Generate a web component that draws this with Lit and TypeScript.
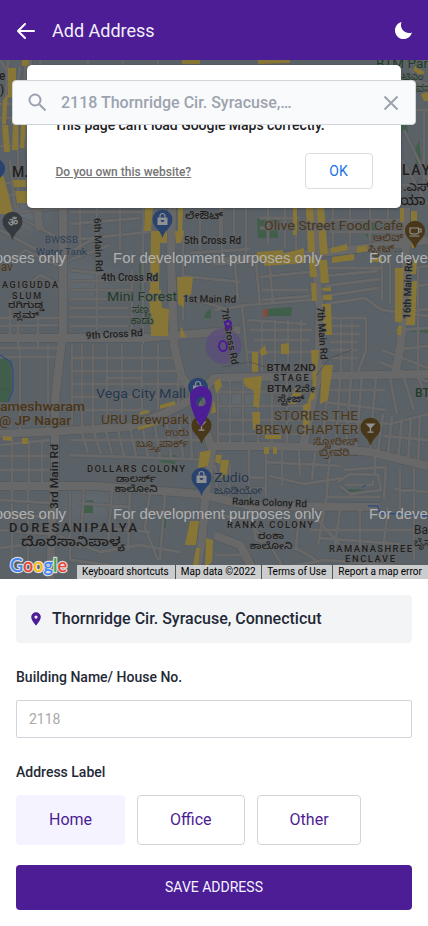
import { LitElement, html, svg, css, nothing } from "lit";
import { customElement, state } from "lit/decorators.js";
import { classMap } from "lit/directives/class-map.js";

/** Road network, grouped by how wide each street is drawn. */
const MAJOR = [
  "M63 208V330L55 400V470L52 525L50 579",
  "M172 208L171 260L174 345L181 375L196 398L212 450L205 500L203 530L196 579",
  "M0 338H145L240 330",
  "M0 434L60 431L130 427L165 413L195 398L214 378L428 374",
  "M212 446L270 446L330 448L370 452L428 466",
  "M316 208V270L320 310L318 375L309 420L303 447",
  "M214 262L330 252L428 240",
  "M406 208L405 300L400 350L395 374",
  "M0 486H95L200 494L250 506L380 507",
  "M28 60L26 120L32 170L40 230",
  "M214 535L240 545L258 579",
];

const MINOR = [
  // north-west
  "M0 183H27M0 195H27M0 208L63 240M0 230L60 262M20 212L60 208M0 270L25 250L63 268M10 335V300L40 275L63 286",
  "M70 212H145M70 224L140 218M70 240L150 232M70 252L95 238M70 260L110 245M97 208V330M143 208V345M120 208V250M80 208V250",
  "M70 281H150M70 290H132M70 299H128M70 308H128M70 317H130M70 326H128M132 270V338M70 270L105 274",
  "M0 318H60M0 326L58 325M18 318V350M38 318V350M20 345V430M48 345V430M0 348H60M0 357H60",
  "M0 60L25 100M8 60L4 130M20 66L12 125M0 104H27M0 118H27M18 125V208M10 160L15 208M0 146H27",
  "M40 60V66M88 60V66M123 60V66M158 60V66M186 60V66",
  // centre
  "M183 230V320M183 240H235M190 253L250 249M183 276L240 282M200 208V250M222 208V262M246 208V260M183 296L230 310M214 310L242 306L248 365",
  "M235 262L238 300M256 262L260 305M269 258L273 303M262 290H308M262 300L310 296M260 277L310 272M238 306L320 299",
  "M250 330H312M254 340H310M248 320L306 324M262 320V372M275 320V372M288 320V372M301 320V372M248 352H312",
  "M325 268H382M325 276L378 271M325 286L380 279M325 296L378 288M325 304L365 298L382 310L428 316M350 247L352 262M382 262V300M390 258V304",
  "M325 318H366V350L358 372M330 326H360M330 334H360M330 342H358M330 350H358M330 358H358M341 318V372M352 322V372",
  // north-east
  "M220 208V240M234 208V240M268 208V245M285 208V248M296 208V250M333 208V250M350 208V245M370 208V242M388 208V240M260 218H300M260 228H300M330 220H402M330 232H402",
  "M404 130L428 180M402 160L428 205M402 185H428M408 65L428 96M404 78L428 84M424 110V190M403 110H428",
  "M400 270L428 266M400 290L428 284M400 312L428 309M396 330L428 328M395 350L428 346M418 266V372",
  // middle band
  "M72 345V425M82 345V426M93 345V426M107 345V425M122 345V420M142 345V414M158 345V410M178 378V402",
  "M72 358H178M72 371H180M72 384H192M72 397H158M72 410H147M108 378H142",
  "M70 440H200M70 455L215 460M82 433L88 453M94 432L101 454M106 432L112 454M118 430L124 456M130 428L136 456M142 424L148 457M154 420L160 457M166 416L171 457M178 414L183 457M190 416L192 460",
  "M0 445L50 440M0 456H54M0 470H54M12 440V484M29 440V484M42 440V484",
  "M218 382V445M230 378V445M243 377V446M258 376V446M272 376V446M287 376V446M218 392H310M218 406H310M218 420H306M218 434H304",
  "M329 378L322 444M340 377L336 446M351 377L346 446M362 376L356 448M376 375L370 450M389 373L397 414M402 372L414 410M415 370L428 400",
  "M330 390H385M325 402L386 410M328 420L390 424L428 414M380 362L428 382M382 350L428 368",
  "M383 414L378 450M392 416L388 455M402 418L398 459M411 417L408 462M420 415L418 464M384 436L428 440",
  // south
  "M70 493L70 560M84 490L80 548M112 490L108 546M130 491L128 550M78 503L130 507M72 525L150 532M150 492L145 528L158 560M165 494L160 560",
  "M0 500L50 503M0 514L52 517M0 530L48 534M12 490V560M28 490V560M0 548L48 542M60 536L100 552L140 545L180 552M70 560L110 565M146 512H195",
  "M215 465L218 500M230 465L228 505M249 448V505M266 450V500M214 475L264 478M214 490L266 488M282 450V486M299 451L300 475M315 452L312 480M266 462L340 466M270 476L304 484L342 478",
  "M338 482L350 474L378 475L381 490L350 494L340 486M345 485H373V480M344 470L386 467L384 499M325 497H380M330 455L326 500L318 545M375 455V475",
  "M218 515L245 519L270 545L290 579M250 508L256 540L300 550M300 508L296 548L316 560M318 520L340 545M340 510L334 552M310 530H420M318 538L400 544M360 509V548M388 507L382 560M400 469V520M414 468V560M270 570L325 560L428 568M215 555H250M394 489L428 492",
];

const FOOTPATH = "M222 367L250 362L275 370M316 376L330 358L352 350M0 389L10 390M402 204L420 178";

const YELLOW = [
  "2,125 8,125 10,152 4,152", "13,124 18,124 18,150 12,150", "21,124 26,124 24,148 20,148",
  "0,164 9,196 13,214 0,214", "13,180 26,180 26,187 14,187", "15,191 27,191 27,203 17,203",
  "8,68 16,68 16,96 8,98", "3,100 8,94 6,124 2,124", "17,106 25,106 25,120 13,120",
  "22,60 29,60 28,66 22,66", "145,208 153,208 151,231 144,231", "178,208 183,208 182,240 178,240",
  "151,231 167,231 167,243 160,243 159,290 150,290", "149,290 161,290 162,308 169,309 168,336 151,336",
  "175,231 184,231 181,243 176,243", "177,277 193,277 191,295 184,297 184,307 178,304", "181,326 186,337 180,337",
  "293,208 297,208 297,235 293,235", "306,208 313,208 315,252 308,252", "317,208 324,208 328,254 320,255",
  "257,252 283,250 283,258 257,261", "264,259 304,248 304,263 264,266", "309,257 315,257 317,277 310,277",
  "319,260 327,260 329,283 321,283", "311,283 316,283 317,301 312,301", "322,288 331,287 331,291 323,291",
  "323,295 332,295 332,300 323,300", "322,304 331,304 332,335 325,335 323,320", "331,248 347,244 348,250 331,253",
  "332,257 354,254 354,260 332,263", "357,247 367,245 368,251 357,253", "395,268 404,268 402,322 395,322",
  "411,231 416,231 416,248 412,248", "410,260 417,260 416,274 410,274", "410,281 417,281 415,325 406,325",
  "370,258 382,257 382,262 370,262", "400,208 404,208 404,222 400,222", "398,326 402,326 401,335 397,335",
  "281,344 289,343 289,354 281,354", "260,350 265,345 267,354 261,356", "252,352 258,352 258,372 252,372",
  "243,378 262,376 260,396 259,408 253,406 254,391 245,386", "252,412 260,412 260,429 253,430",
  "311,350 319,350 315,398 307,404 313,386", "322,365 333,365 328,400 320,404", "265,435 281,435 281,439 265,439",
  "262,427 269,427 269,433 262,433", "264,447 269,447 269,454 264,454", "273,447 277,447 277,454 273,454",
  "221,460 229,460 227,474 219,479", "214,382 220,378 222,386 216,394", "295,388 303,391 296,404 288,404",
  "3,436 12,437 12,441 3,440", "22,438 28,438 28,444 22,444", "140,412 149,410 149,413 139,415",
  "160,405 175,401 175,405 160,409", "138,427 160,421 160,424 138,430", "214,399 216,412 211,414",
  "200,452 211,450 208,466 198,468", "190,521 199,521 196,545 185,545", "196,548 200,548 198,565 193,565",
  "206,538 213,540 212,562 205,568", "216,455 222,455 220,464 215,462", "258,60 290,60 290,63 258,64",
  "182,60 200,60 200,64 182,64", "415,66 425,72 421,76 413,70", "421,94 428,92 428,101 424,101",
  "411,211 417,211 417,222 411,222", "303,405 311,402 309,430 303,436",
];

const GREEN = [
  "0,355 11,362 12,390 8,402 0,402", "267,309 292,307 291,316 267,316", "84,501 93,500 93,513 84,513",
  "257,219 278,216 278,238 258,238", "366,224 376,222 376,237 366,237", "161,456 176,455 175,464 159,462",
  "162,515 166,512 166,528 162,528", "342,489 372,490 371,494 343,492", "407,327 428,327 428,333 407,331",
  "415,150 419,140 421,160 416,166", "139,264 143,264 144,320 141,320", "206,312 211,309 211,318 204,318",
  "402,125 407,125 408,132 402,132",
];

type Label = { t: string; x: number; y: number; s?: number; w?: number; c?: string; a?: string; r?: number; b?: boolean };

const LABELS: Label[] = [
  { t: "6th Main Rd", x: 94, y: 218, s: 10, w: 54, r: 88, b: true },
  { t: "BWSSB", x: 45, y: 243, s: 9.5, w: 33, c: "civic" },
  { t: "Water Tank", x: 36, y: 254.5, s: 9.5, w: 51, c: "civic" },
  { t: "nav", x: -6, y: 271, s: 12, c: "food" },
  { t: "AGIGUDDA", x: 2, y: 288, s: 9, w: 56, b: true },
  { t: "SLUM", x: 12, y: 298.5, s: 9, w: 29, b: true },
  { t: "ರಗಿಗುಡ್ಡ", x: 26, y: 308, s: 9, w: 36, a: "middle", b: true },
  { t: "ಸ್ಲಮ್", x: 26, y: 318, s: 9, w: 26, a: "middle", b: true },
  { t: "4th Cross Rd", x: 101, y: 281, s: 10, w: 57, b: true },
  { t: "5th Cross Rd", x: 184, y: 244, s: 10, w: 57, b: true },
  { t: "1st Main Rd", x: 183, y: 302, s: 10, w: 53, b: true, r: 1 },
  { t: "Mini Forest", x: 107, y: 301, s: 13, w: 70, c: "park" },
  { t: "ಸಣ್ಣ", x: 141, y: 313, s: 10, w: 18, a: "middle", c: "park" },
  { t: "ಕಾಡು", x: 142, y: 324, s: 10, w: 23, a: "middle", c: "park" },
  { t: "9th Cross Rd", x: 86, y: 339, s: 10, w: 57, b: true, r: -3 },
  { t: "ಲೇಔಟ್", x: 204, y: 219, s: 10, w: 38, a: "middle", b: true },
  { t: "Olive Street Food Cafe", x: 264, y: 230, s: 12.5, w: 139, c: "food" },
  { t: "ಆಲಿವ್", x: 403, y: 241, s: 10, w: 30, a: "end", c: "food" },
  { t: "ಸ್ಟ್ರೀಟ್...", x: 403, y: 252, s: 10, w: 35, a: "end", c: "food" },
  { t: "16th Main Rd", x: 410, y: 319, s: 10, w: 59, r: -88, b: true },
  { t: "7th Main Rd", x: 317, y: 307, s: 10, w: 53, r: 86, b: true },
  { t: "7th Cross Rd", x: 221, y: 309, s: 10, w: 57, r: 79, b: true },
  { t: "BTM 2ND", x: 291, y: 371, s: 9, w: 49, a: "middle", b: true },
  { t: "STAGE", x: 291, y: 381, s: 9, w: 35, a: "middle", b: true },
  { t: "BTM 2ನೇ", x: 291, y: 391.5, s: 9.5, w: 48, a: "middle", b: true },
  { t: "ಸ್ಟೇಜ್", x: 291, y: 402, s: 9.5, w: 27, a: "middle", b: true },
  { t: "Vega City Mall", x: 96, y: 398, s: 13, w: 90, c: "shop" },
  { t: "ameshwaram", x: 0, y: 411, s: 13, w: 85, c: "food", b: true },
  { t: "@ JP Nagar", x: -1, y: 425, s: 13, w: 72, c: "food", b: true },
  { t: "URU Brewpark", x: 101, y: 424, s: 13, w: 88, c: "food" },
  { t: "ಉರು", x: 189, y: 436, s: 10, w: 24, a: "end", c: "food" },
  { t: "ಬ್ರ್ಯೂಪಾರ್ಕ್", x: 189, y: 447, s: 10, w: 53, a: "end", c: "food" },
  { t: "STORIES THE", x: 358, y: 420, s: 13.5, w: 84, a: "end", c: "food" },
  { t: "BREW CHAPTER", x: 358, y: 434, s: 13.5, w: 103, a: "end", c: "food" },
  { t: "ಸ್ಟೋರೀಸ್", x: 358, y: 445, s: 10, w: 45, a: "end", c: "food" },
  { t: "ಬ್ರೀವರಿ...", x: 358, y: 456, s: 10, w: 39, a: "end", c: "food" },
  { t: "BTM", x: 415, y: 397, s: 12, c: "park", b: true },
  { t: "3rd Main Rd", x: 58, y: 509, s: 11, w: 65, r: -90, b: true },
  { t: "DOLLARS COLONY", x: 87, y: 472, s: 9.4, w: 98, b: true },
  { t: "ಡಾಲರ್ಸ್", x: 136, y: 482, s: 9.5, w: 40, a: "middle", b: true },
  { t: "ಕಾಲೋನಿ", x: 136, y: 492, s: 9.5, w: 43, a: "middle", b: true },
  { t: "Zudio", x: 214, y: 482, s: 13, w: 35, c: "shop" },
  { t: "ಜೂಡಿಯೋ", x: 214, y: 494, s: 10, w: 48, c: "shop" },
  { t: "Ranka Colony Rd", x: 232, y: 504.5, s: 10, w: 75, b: true, r: 2 },
  { t: "RANKA COLONY", x: 227, y: 528, s: 9.4, w: 86, b: true },
  { t: "ರಂಕಾ", x: 271, y: 539, s: 9.5, w: 26, a: "middle", b: true },
  { t: "ಕಾಲೋನಿ", x: 271, y: 548.5, s: 9.5, w: 43, a: "middle", b: true },
  { t: "DORESANIPALYA", x: 9, y: 531.5, s: 13, w: 128, b: true },
  { t: "ದೊರೆಸಾನಿಪಾಳ್ಯ", x: 73, y: 546, s: 13, w: 104, a: "middle", b: true },
  { t: "RAMANASHREE", x: 329, y: 551.5, s: 9.4, w: 83, b: true },
  { t: "ENCLAVE", x: 370, y: 561.5, s: 9.4, w: 50, a: "middle", b: true },
  { t: "Ba", x: 414, y: 534, s: 12 },
  { t: "ಬೈಸ", x: 414, y: 546, s: 10 },
  { t: "M.", x: 12, y: 177, s: 14, b: true },
  { t: "LAY", x: 402, y: 175, s: 14, w: 28, b: true },
  { t: ".ಎಸ್", x: 403, y: 191, s: 13, b: true },
  { t: "ಯಾ", x: 400, y: 205, s: 14, b: true },
  { t: "BTM Par", x: 376, y: 67.5, s: 12.5, w: 52, c: "park" },
  { t: "ಟಿಎಂ", x: 402, y: 80, s: 10, c: "park" },
  { t: "ವನ", x: 416, y: 92, s: 10, c: "park" },
  { t: "e", x: -1, y: 80, s: 12, b: true },
  { t: ")", x: 0, y: 94, s: 12, b: true },
];

@customElement("street-map")
export class StreetMap extends LitElement {
  static styles = css`
    :host { display: block; line-height: 0; }
    svg { width: 100%; height: 519px; display: block; font-family: Roboto, "Noto Sans", "Noto Sans Kannada", sans-serif; }
    .land { fill: #5a6167; }
    .edge, .road { fill: none; stroke-linejoin: round; }
    .edge { stroke: #54595c; }
    .road { stroke: #686868; }
    .major.edge { stroke-width: 9.4; }
    .major.road { stroke-width: 8.2; }
    .minor.edge { stroke-width: 3.8; }
    .minor.road { stroke-width: 2.8; }
    .path { fill: none; stroke: #4a4e50; stroke-width: 0.7; }
    .yellow { fill: #887637; }
    .green { fill: #415e4a; }
    .red { fill: #824c42; }
    .water { fill: none; stroke: #304f80; stroke-width: 1.3; }
    .label { fill: #1e1f20; stroke: #626466; stroke-width: 1.6px; paint-order: stroke; stroke-linejoin: round; }
    .label.bold { font-weight: 500; }
    .label.food { fill: #493517; }
    .label.shop { fill: #223750; }
    .label.civic { fill: #293d59; }
    .label.park { fill: #1f3b29; }
    .mark { fill: #b0b1b2; font: 15px "Liberation Sans", Arial, sans-serif; }
    .halo { fill: #5b4b7d; opacity: 0.72; }
    .violet { fill: #4c1d95; }
    .ring { fill: none; stroke: #4c1d95; stroke-width: 2; }
    .shop-pin { fill: #29436e; }
    .food-pin { fill: #493719; }
    .temple-pin { fill: #343a3d; }
    .glyph { fill: #8f9192; }
    .outline { fill: none; stroke: #8f9192; stroke-width: 1.2; }
    .om { fill: #8f9192; font: 700 11px "DejaVu Sans", sans-serif; text-anchor: middle; }
    .logo { font: 600 20px Lato, "Open Sans", sans-serif; stroke: #dcdcdc; stroke-width: 2.4px; paint-order: stroke; stroke-linejoin: round; }
    .g-blue { fill: #4285f4; }
    .g-red { fill: #ea4335; }
    .g-yellow { fill: #fbbc05; }
    .g-green { fill: #34a853; }
  `;

  private label(l: Label) {
    return svg`<text class=${classMap({ label: true, bold: !!l.b, [l.c ?? "plain"]: true })}
      x=${l.x} y=${l.y} font-size=${l.s ?? 10} text-anchor=${l.a ?? "start"}
      textLength=${l.w ?? nothing} lengthAdjust=${/^[A-Z ]+$/.test(l.t) ? "spacing" : "spacingAndGlyphs"}
      transform=${l.r ? `rotate(${l.r} ${l.x} ${l.y})` : nothing}>${l.t}</text>`;
  }

  private pin(x: number, y: number, kind: string, glyph: unknown) {
    return svg`<g transform="translate(${x} ${y})">
      <path class=${kind} d="M0 18C-1.4 13-4 10-7.5 6.4A10 10 0 1 1 7.5 6.4C4 10 1.4 13 0 18Z"/>${glyph}</g>`;
  }

  render() {
    const bag = svg`<path class="glyph" d="M-5-2.5H5V5H-5Z"/><path class="outline" d="M-2.5-2.5V-4A2.5 2.5 0 0 1 2.5-4V-2.5"/><path class="shop-pin" d="M-2 0H2A2 2 0 0 1-2 0Z"/>`;
    const glass = svg`<path class="glyph" d="M-5-4.5H5L.7 0V3.5H3V4.7H-3V3.5H-.7V0Z"/>`;
    const cup = svg`<path class="outline" d="M-5-3H3.5V1.5Q3.5 3-1 3T-5 1ZM3.5-2H6V1H3.5M-5.5 5H4.5"/>`;
    return html`<svg viewBox="0 60 428 519" aria-label="Map">
      <defs>
        <radialGradient id="tone"><stop offset="0" stop-color="#6c757c" stop-opacity=".5"/><stop offset="1" stop-color="#6c757c" stop-opacity="0"/></radialGradient>
      </defs>
      <rect class="land" x="0" y="60" width="428" height="519"/>
      <ellipse cx="85" cy="280" rx="40" ry="26" fill="url(#tone)"/>
      <ellipse cx="25" cy="215" rx="30" ry="22" fill="url(#tone)"/>
      <ellipse cx="90" cy="505" rx="40" ry="25" fill="url(#tone)"/>
      <ellipse cx="240" cy="400" rx="30" ry="20" fill="url(#tone)"/>
      ${GREEN.map((p) => svg`<polygon class="green" points=${p}/>`)}
      ${MINOR.map((d) => svg`<path class="edge minor" d=${d}/>`)}
      ${MAJOR.map((d) => svg`<path class="edge major" d=${d}/>`)}
      ${MINOR.map((d) => svg`<path class="road minor" d=${d}/>`)}
      ${MAJOR.map((d) => svg`<path class="road major" d=${d}/>`)}
      ${YELLOW.map((p) => svg`<polygon class="yellow" points=${p}/>`)}
      <rect class="red" x="263" y="309" width="4.5" height="8"/>
      <path class="path" d=${FOOTPATH}/>
      <path class="water" d="M0 355L11 362L13 371V390L8 402M368 506H378L380 513L428 516M362 487L366 485"/>
      <circle class="halo" cx="223.500" cy="346" r="18"/>
      ${LABELS.map((l) => this.label(l))}
      <path class="violet" fill-rule="evenodd" d="M228 320A4 4 0 0 1 232 324Q231 328 228 331Q225 328 224 324A4 4 0 0 1 228 320ZM228 322.500A1.500 1.500 0 1 0 228 325.500A1.500 1.500 0 1 0 228 322.500Z"/>
      <ellipse class="ring" cx="223" cy="346" rx="4" ry="5"/>
      ${this.pin(12.5, 222, "temple-pin", svg`<text class="om" y="4">ॐ</text>`)}
      ${this.pin(162.5, 220, "shop-pin", bag)}
      ${this.pin(415, 231, "food-pin", cup)}
      ${this.pin(370.5, 428, "food-pin", glass)}
      ${this.pin(201.5, 478, "shop-pin", bag)}
      ${this.pin(198, 388, "shop-pin", bag)}
      ${this.pin(201.5, 426, "food-pin", glass)}
      ${this.pin(-5, 169, "shop-pin", nothing)}
      ${[257, 513].map((y) => [-143, 113, 369].map((x) => svg`<text class="mark" x=${x} y=${y + 5.9} textLength="209">For development purposes only</text>`))}
      <path class="violet" fill-rule="evenodd" d="M201 386C207.500 386 212 391 212 398C212 408 206 420 201 427C196 420 190 408 190 398C190 391 194.500 386 201 386ZM201 397A3.700 4.700 0 1 0 201 406A3.700 4.700 0 1 0 201 397Z"/>
      <text class="logo" x="10" y="572" textLength="57" lengthAdjust="spacingAndGlyphs"><tspan class="g-blue">G</tspan><tspan class="g-red">o</tspan><tspan class="g-yellow">o</tspan><tspan class="g-blue">g</tspan><tspan class="g-green">l</tspan><tspan class="g-red">e</tspan></text>
    </svg>`;
  }
}

@customElement("app-root")
export class AppRoot extends LitElement {
  static styles = css`
    :host { display: block; height: 926px; overflow: hidden; background: #fff; font-family: Roboto, "Noto Sans", sans-serif; color: #1f2937; }
    * { box-sizing: border-box; }
    button { font: inherit; cursor: pointer; }
    svg { display: block; flex: none; }
    .header { height: 60px; padding: 1px 16px 0 17px; display: flex; align-items: center; background: #4c1d95; color: #f3effa; }
    .header h1 { margin: 0 auto 0 17px; font-size: 18px; font-weight: 400; }
    .map { position: relative; height: 519px; overflow: hidden; }
    .dialog { position: absolute; left: 27px; right: 27px; top: 5px; height: 143px; padding: 51px 28.5px 19px 27px; display: flex; flex-direction: column; justify-content: space-between; background: #fff; border-radius: 5px; box-shadow: 0 1px 3px rgb(0 0 0 / 30%); }
    .message { font-size: 14px; line-height: 18px; font-weight: 500; color: #202124; white-space: nowrap; letter-spacing: -0.03px; }
    .actions { display: flex; align-items: center; justify-content: space-between; }
    .own { padding: 2px 0 0 1.5px; font-size: 12px; font-weight: 500; color: #757575; text-decoration: underline; }
    .ok { width: 68px; height: 36px; padding: 0; border: 1px solid #dadce0; border-radius: 4px; background: #fff; color: #1a73e8; font-size: 14px; }
    .search { position: absolute; left: 12px; right: 12px; top: 20px; height: 45px; padding: 0 16px 0 15px; display: flex; align-items: center; background: #f9fafb; border: 1px solid #d1d5db; border-radius: 4px; color: #9ca3af; }
    .query { margin: 0 auto 0 14px; font-size: 16px; font-weight: 500; }
    .credits { position: absolute; right: 0; bottom: 0; height: 14px; width: 351px; display: flex; background: rgb(245 245 245 / 72%); color: #000; font-size: 10px; line-height: 13px; white-space: nowrap; }
    .credits span { padding: 0 6px 0 5px; }
    .credits span + span { border-left: 1px solid #555; }
    .credits span:nth-child(2) { padding-right: 5.5px; }
    .form { padding: 16px; display: flex; flex-direction: column; }
    .place { height: 48px; padding: 0 12px 0 15px; display: flex; align-items: center; gap: 11px; border-radius: 4px; background: #f3f4f6; font-size: 16px; font-weight: 500; }
    .place span { padding-bottom: 2px; }
    .caption { font-size: 14px; line-height: 20px; font-weight: 500; }
    .building { margin-top: 24px; }
    .field { height: 38px; margin: 13px 0 0; padding: 0 12px; border: 1px solid #d1d5db; border-radius: 2px; font: 14px Roboto, sans-serif; outline: none; }
    .field::placeholder { color: #a9a9a9; opacity: 1; }
    .kind { margin-top: 24px; }
    .chips { display: flex; gap: 12px; margin-top: 13px; }
    .chip { height: 50px; padding: 0 32px 2px; border: 1px solid #d1d5db; border-radius: 4px; background: #fff; color: #4c1d95; font-size: 16px; }
    .chip:last-child { padding-right: 31.5px; }
    .chip.on { background: #f5f3ff; border-color: #f5f3ff; }
    .save { height: 45px; margin-top: 20px; padding: 0 0 2px; border: 0; border-radius: 4px; background: #4c1d95; color: #f5f3ff; font-size: 14px; }
  `;

  @state() private selected = "Home";

  render() {
    return html`
      <header class="header">
        <svg width="18" height="16" viewBox="0 0 18 16" fill="none" stroke="#fff" stroke-width="2" stroke-linecap="round" stroke-linejoin="round"><path d="M17 8H1M8 1L1 8L8 15"/></svg>
        <h1>Add Address</h1>
        <svg width="17" height="17" viewBox="51 50 411 411" fill="#fff"><path d="M195 125c0-26.300 5.300-51.300 14.900-74.100C118.700 73 51 155.100 51 253c0 114.800 93.200 208 208 208 97.900 0 180-67.700 202.100-158.900-22.800 9.600-47.900 14.900-74.100 14.900-106 0-192-86-192-192z"/></svg>
      </header>
      <section class="map">
        <street-map></street-map>
        <div class="dialog">
          <div class="message">This page can't load Google Maps correctly.</div>
          <div class="actions"><span class="own">Do you own this website?</span><button class="ok">OK</button></div>
        </div>
        <div class="search">
          <svg width="19" height="19" viewBox="0 0 19 19" fill="none" stroke="currentColor" stroke-width="2"><circle cx="7" cy="7" r="5.500"/><path d="M11.300 11.300L17.500 17.500"/></svg>
          <span class="query">2118 Thornridge Cir. Syracuse,…</span>
          <svg width="16" height="16" viewBox="0 0 16 16" fill="none" stroke="currentColor" stroke-width="2"><path d="M1.500 1.500L14.500 14.500M14.500 1.500L1.500 14.500"/></svg>
        </div>
        <div class="credits"><span>Keyboard shortcuts</span><span>Map data ©2022</span><span>Terms of Use</span><span>Report a map error</span></div>
      </section>
      <main class="form">
        <div class="place">
          <svg width="10" height="14" viewBox="0 0 10 14" fill="#4c1d95"><path fill-rule="evenodd" d="M5 .300A4.800 4.800 0 0 0 .200 5.100C.200 8.500 5 13.700 5 13.700S9.800 8.500 9.800 5.100A4.800 4.800 0 0 0 5 .300ZM5 3.500A1.600 1.600 0 1 1 5 6.700A1.600 1.600 0 1 1 5 3.500Z"/></svg>
          <span>Thornridge Cir. Syracuse, Connecticut</span>
        </div>
        <label class="caption building" for="building">Building Name/ House No.</label>
        <input class="field" id="building" placeholder="2118" />
        <div class="caption kind">Address Label</div>
        <div class="chips">
          ${["Home", "Office", "Other"].map((name) => html`<button
            class=${classMap({ chip: true, on: this.selected === name })}
            @click=${() => (this.selected = name)}>${name}</button>`)}
        </div>
        <button class="save">SAVE ADDRESS</button>
      </main>
    `;
  }
}
